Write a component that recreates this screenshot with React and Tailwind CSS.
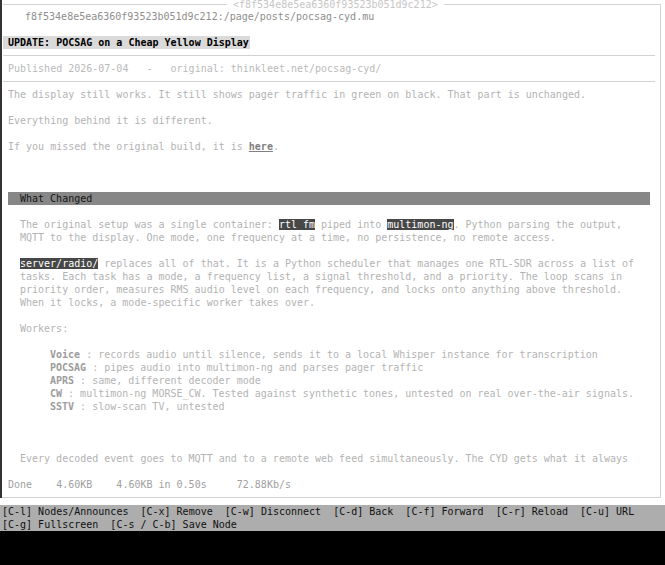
import React from "react";

function R({ className = "", children }) {
  return <div className={"h-[13px] pt-px leading-[12px] whitespace-pre " + className}>{children}</div>;
}

function Sep() {
  return (
    <div className="h-[13px] flex items-center">
      <div className="flex-1 h-px bg-[#d2d2d2] ml-px mr-[5px]" />
    </div>
  );
}

function Hl({ children }) {
  return <span className="bg-[#474747] text-white">{children}</span>;
}

function W({ name, rest }) {
  return (
    <R className="pl-[48px] text-[#b4b4b4]">
      <span className="font-bold text-[#9c9c9c]">{name}</span>
      {rest}
    </R>
  );
}

export default function App() {
  return (
    <div className="w-[665px] h-[565px] bg-black overflow-hidden font-['DejaVu_Sans_Mono',monospace] text-[10px] leading-[13px]">
      <div className="bg-white h-[505px]">
        <div className="w-[661px] h-[498px] border-l-2 border-l-[#333333] flex flex-col">
          <div className="h-[10px] flex shrink-0">
            <div className="w-[224px] ml-px mt-[4px] border-t border-[#d2d2d2]" />
            <div className="px-[6px] leading-[9px] text-[#c6c6c6] whitespace-pre">&lt;f8f534e8e5ea6360f93523b051d9c212&gt;</div>
            <div className="flex-1 mt-[4px] border-t border-r border-[#d2d2d2]" />
          </div>
          <div className="flex-1 border-r border-b border-[#d2d2d2] flex flex-col text-[#b3b3b3]">
            <R className="pl-[23px] text-[#8e8e8e]">f8f534e8e5ea6360f93523b051d9c212:/page/posts/pocsag-cyd.mu</R>
            <R />
            <div className="h-[13px] ml-px">
              <div className="w-[247px] h-[13px] pt-px leading-[12px] bg-[#dadada] pl-[5px] font-bold text-black">UPDATE: POCSAG on a Cheap Yellow Display</div>
            </div>
            <Sep />
            <R className="pl-[6px] text-[#bababa]">Published 2026-07-04   -   original: thinkleet.net/pocsag-cyd/</R>
            <Sep />
            <R className="pl-[6px]">The display still works. It still shows pager traffic in green on black. That part is unchanged.</R>
            <R />
            <R className="pl-[6px]">Everything behind it is different.</R>
            <R />
            <R className="pl-[6px]">
              If you missed the original build, it is <span className="font-bold underline text-[#808080]">here</span>.
            </R>
            <R />
            <R />
            <R />
            <R className="ml-[6px] mr-[10px] bg-[#878787] pl-[12px] text-[#151515]">What Changed</R>
            <R />
            <R className="pl-[18px]">
              The original setup was a single container: <Hl>rtl_fm</Hl> piped into <Hl>multimon-ng</Hl>. Python parsing the output,
            </R>
            <R className="pl-[18px]">MQTT to the display. One mode, one frequency at a time, no persistence, no remote access.</R>
            <R />
            <R className="pl-[18px]">
              <Hl>server/radio/</Hl> replaces all of that. It is a Python scheduler that manages one RTL-SDR across a list of
            </R>
            <R className="pl-[18px]">tasks. Each task has a mode, a frequency list, a signal threshold, and a priority. The loop scans in</R>
            <R className="pl-[18px]">priority order, measures RMS audio level on each frequency, and locks onto anything above threshold.</R>
            <R className="pl-[18px]">When it locks, a mode-specific worker takes over.</R>
            <R />
            <R className="pl-[18px]">Workers:</R>
            <R />
            <W name="Voice" rest=" : records audio until silence, sends it to a local Whisper instance for transcription" />
            <W name="POCSAG" rest=" : pipes audio into multimon-ng and parses pager traffic" />
            <W name="APRS" rest=" : same, different decoder mode" />
            <W name="CW" rest=" : multimon-ng MORSE_CW. Tested against synthetic tones, untested on real over-the-air signals." />
            <W name="SSTV" rest=" : slow-scan TV, untested" />
            <R />
            <R />
            <R />
            <R className="pl-[18px]">Every decoded event goes to MQTT and to a remote web feed simultaneously. The CYD gets what it always</R>
            <R />
            <R className="pl-[6px] text-[#a0a0a0]">Done    4.60KB    4.60KB in 0.50s     72.88Kb/s</R>
          </div>
        </div>
      </div>
      <div className="bg-[#adadad] h-[26px] text-[#111111]">
        <R className="pl-[2px]">[C-l] Nodes/Announces  [C-x] Remove  [C-w] Disconnect  [C-d] Back  [C-f] Forward  [C-r] Reload  [C-u] URL</R>
        <R className="pl-[2px]">[C-g] Fullscreen  [C-s / C-b] Save Node</R>
      </div>
    </div>
  );
}
